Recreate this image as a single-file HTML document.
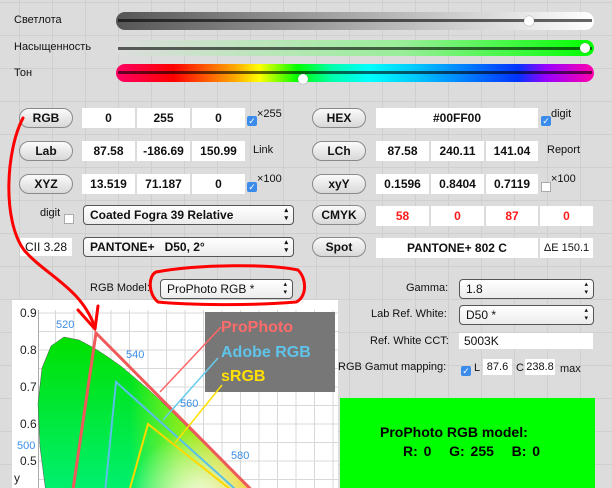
<!DOCTYPE html>
<html style="overflow:hidden;width:612px;height:488px"><head><meta charset="utf-8"><style>
*{box-sizing:border-box;margin:0;padding:0}
body{width:612px;height:488px;overflow:hidden;position:relative;font-family:"Liberation Sans",sans-serif;
background-color:#dcdcdc;
background-image:linear-gradient(to right,#cfcfcf 1px,transparent 1px),linear-gradient(to bottom,#cfcfcf 1px,transparent 1px);
background-size:33px 33px;background-position:19px 2px}
.a{position:absolute}
.lbl{position:absolute;font-size:11px;color:#111;white-space:nowrap}
.trk{position:absolute;left:116px;width:478px;height:18px;border-radius:9px}
.trk:after{content:"";position:absolute;left:2px;right:2px;top:7px;height:3px;background:rgba(0,0,0,.6)}
.knob{position:absolute;width:10px;height:10px;border-radius:50%;background:#fff;box-shadow:0 0 1px #555;z-index:2}
.btn{position:absolute;width:54px;height:20px;border-radius:10px;border:1px solid #8a8a8a;background:linear-gradient(#fbfbfb,#d8d8d8);font-weight:bold;font-size:12px;text-align:center;line-height:18px;color:#111}
.f{position:absolute;height:20px;background:#fff;font-weight:bold;font-size:12px;text-align:center;line-height:20px;color:#111}
.sel{position:absolute;height:20px;border:1px solid #555;border-radius:4px;background:linear-gradient(#fff,#ececec);font-size:12px;line-height:18px;padding-left:6px;color:#111}
.sel:after{content:"▴\A▾";white-space:pre;position:absolute;right:5px;top:1px;font-size:7px;line-height:8px}
.cb{position:absolute;width:10px;height:10px;border-radius:2px;background:#3b8bea;color:#fff;font-size:9px;line-height:10px;text-align:center}
.cbe{position:absolute;width:10px;height:10px;background:#fff;border:1px solid #aaa}
.r{color:#ff1a1a}
</style></head><body>
<div class="lbl" style="left:14px;top:14px">Светлота</div>
<div class="trk" style="top:12px;background:linear-gradient(to right,#555,#aaa 50%,#fff)"></div>
<div class="knob" style="left:524px;top:16px"></div>
<div class="lbl" style="left:14px;top:41px">Насыщенность</div>
<div class="trk" style="top:40px;height:16px;background:linear-gradient(to right,#ddd,#9e9 60%,#0f0)"></div>
<div class="knob" style="left:580px;top:43px"></div>
<div class="lbl" style="left:14px;top:67px">Тон</div>
<div class="trk" style="top:64px;background:linear-gradient(to right,#f06,#f00 12%,#fa0 25%,#ff0 30%,#0f0 38%,#0fa 45%,#0ff 53%,#0cf 62%,#03f 84%,#90f 90%,#f0a 100%)"></div>
<div class="knob" style="left:298px;top:74px"></div>

<div class="btn" style="left:19px;top:108px">RGB</div>
<div class="f" style="left:82px;top:108px;width:53px">0</div>
<div class="f" style="left:137px;top:108px;width:53px">255</div>
<div class="f" style="left:192px;top:108px;width:53px">0</div>
<div class="cb" style="left:247px;top:116px">✓</div><div class="lbl" style="left:257px;top:108px">×255</div>
<div class="btn" style="left:19px;top:141px">Lab</div>
<div class="f" style="left:82px;top:141px;width:53px">87.58</div>
<div class="f" style="left:137px;top:141px;width:53px">-186.69</div>
<div class="f" style="left:192px;top:141px;width:53px">150.99</div>
<div class="lbl" style="left:253px;top:144px">Link</div>
<div class="btn" style="left:19px;top:174px">XYZ</div>
<div class="f" style="left:82px;top:174px;width:53px">13.519</div>
<div class="f" style="left:137px;top:174px;width:53px">71.187</div>
<div class="f" style="left:192px;top:174px;width:53px">0</div>
<div class="cb" style="left:247px;top:182px">✓</div><div class="lbl" style="left:257px;top:173px">×100</div>
<div class="lbl" style="left:40px;top:207px">digit</div><div class="cbe" style="left:64px;top:214px"></div>
<div class="sel" style="left:83px;top:205px;width:211px;font-weight:bold">Coated Fogra 39 Relative</div>
<div class="f" style="left:20px;top:238px;width:52px;height:18px;line-height:18px;font-weight:normal">CII 3.28</div>
<div class="sel" style="left:83px;top:237px;width:211px;font-weight:bold">PANTONE+&nbsp;&nbsp; D50, 2°</div>
<div class="lbl" style="left:90px;top:282px">RGB Model:</div>
<div class="sel" style="left:160px;top:279px;width:133px">ProPhoto RGB *</div>

<div class="btn" style="left:312px;top:108px">HEX</div>
<div class="f" style="left:376px;top:108px;width:162px">#00FF00</div>
<div class="cb" style="left:541px;top:116px">✓</div><div class="lbl" style="left:551px;top:108px">digit</div>
<div class="btn" style="left:312px;top:141px">LCh</div>
<div class="f" style="left:376px;top:141px;width:53px">87.58</div>
<div class="f" style="left:431px;top:141px;width:53px">240.11</div>
<div class="f" style="left:486px;top:141px;width:52px">141.04</div>
<div class="lbl" style="left:547px;top:144px">Report</div>
<div class="btn" style="left:312px;top:174px">xyY</div>
<div class="f" style="left:376px;top:174px;width:53px">0.1596</div>
<div class="f" style="left:431px;top:174px;width:53px">0.8404</div>
<div class="f" style="left:486px;top:174px;width:52px">0.7119</div>
<div class="cbe" style="left:541px;top:182px"></div><div class="lbl" style="left:551px;top:173px">×100</div>
<div class="btn" style="left:312px;top:205px">CMYK</div>
<div class="f r" style="left:376px;top:206px;width:53px">58</div>
<div class="f r" style="left:431px;top:206px;width:53px">0</div>
<div class="f r" style="left:486px;top:206px;width:52px">87</div>
<div class="f r" style="left:540px;top:206px;width:53px">0</div>
<div class="btn" style="left:312px;top:237px">Spot</div>
<div class="f" style="left:376px;top:238px;width:162px">PANTONE+ 802 C</div>
<div class="f" style="left:540px;top:238px;width:53px;font-weight:normal;font-size:11px">ΔE 150.1</div>
<div class="lbl" style="left:406px;top:282px">Gamma:</div>
<div class="sel" style="left:459px;top:279px;width:135px">1.8</div>
<div class="lbl" style="left:371px;top:308px">Lab Ref. White:</div>
<div class="sel" style="left:459px;top:305px;width:135px">D50 *</div>
<div class="lbl" style="left:370px;top:335px">Ref. White CCT:</div>
<div class="f" style="left:459px;top:333px;width:134px;height:16px;line-height:16px;text-align:left;padding-left:5px;font-weight:normal">5003K</div>
<div class="lbl" style="left:338px;top:361px">RGB Gamut mapping:</div>
<div class="cb" style="left:461px;top:366px">✓</div><div class="lbl" style="left:474px;top:362px">L</div>
<div class="f" style="left:483px;top:359px;width:29px;height:16px;line-height:16px;font-weight:normal;font-size:11px">87.6</div>
<div class="lbl" style="left:516px;top:362px">C</div>
<div class="f" style="left:525px;top:359px;width:30px;height:16px;line-height:16px;font-weight:normal;font-size:11px;overflow:hidden;white-space:nowrap">238.8</div>
<div class="lbl" style="left:560px;top:363px">max</div>
<div class="a" style="left:340px;top:398px;width:255px;height:90px;background:#00ff00"></div>
<div class="a" style="left:380px;top:424px;font-weight:bold;font-size:14px;color:#000;white-space:nowrap">ProPhoto RGB model:</div>
<div class="a" style="left:403px;top:443px;font-weight:bold;font-size:14px;color:#000;word-spacing:2px;white-space:nowrap">R: 0&nbsp;&nbsp; G: 255&nbsp;&nbsp; B: 0</div>

<svg class="a" style="left:0;top:0;display:block" width="612" height="488" viewBox="0 0 612 488">
<defs>
<linearGradient id="g1" x1="0" y1="0" x2="0" y2="1"><stop offset="0" stop-color="#00e000"/><stop offset=".5" stop-color="#00f070"/><stop offset="1" stop-color="#00ffd0"/></linearGradient>
<linearGradient id="g2" x1="130" y1="0" x2="310" y2="0" gradientUnits="userSpaceOnUse"><stop offset="0" stop-color="#ff0" stop-opacity="0"/><stop offset=".3" stop-color="#ee0" stop-opacity=".6"/><stop offset=".6" stop-color="#fc0" stop-opacity=".9"/><stop offset="1" stop-color="#f70"/></linearGradient>
<radialGradient id="g3" cx="200" cy="500" r="70" gradientUnits="userSpaceOnUse"><stop offset="0" stop-color="#fff" stop-opacity=".9"/><stop offset="1" stop-color="#fff" stop-opacity="0"/></radialGradient>
<clipPath id="cp"><rect x="12" y="300" width="326" height="188"/></clipPath>
</defs>
<rect x="12" y="300" width="326" height="188" fill="#fff"/>
<g clip-path="url(#cp)">
<g stroke="#d8d8d8" stroke-width="1">
<path d="M38 313H338M38 331.5H338M38 350H338M38 368.5H338M38 387H338M38 405.5H338M38 424H338M38 442.5H338M38 461H338M38 479.5H338"/>
<path d="M55.5 310V488M74 310V488M92.5 310V488M111 310V488M129.5 310V488M148 310V488M166.5 310V488M185 310V488M203.5 310V488M222 310V488M240.5 310V488M259 310V488M277.5 310V488M296 310V488M314.5 310V488M333 310V488"/>
</g>
<path d="M38.5 310V488" stroke="#aaa"/>
<path d="M101 644L90 635 83 625 78 614 71 597 62 572 54 537 46 493 40 447 38 404 42 368 51 346 64 337 79 340 94 348 108 357 122 367 135 378 149 390 162 402 175 415 188 428 201 441 214 453 227 466 250 489 269 508 293 532 309 548Z" fill="url(#g1)" stroke="#555" stroke-width=".5"/>
<path d="M101 644L90 635 83 625 78 614 71 597 62 572 54 537 46 493 40 447 38 404 42 368 51 346 64 337 79 340 94 348 108 357 122 367 135 378 149 390 162 402 175 415 188 428 201 441 214 453 227 466 250 489 269 508 293 532 309 548Z" fill="url(#g2)"/>
<path d="M101 644L90 635 83 625 78 614 71 597 62 572 54 537 46 493 40 447 38 404 42 368 51 346 64 337 79 340 94 348 108 357 122 367 135 378 149 390 162 402 175 415 188 428 201 441 214 453 227 466 250 489 269 508 293 532 309 548Z" fill="url(#g3)"/>
<path d="M148 424L274 524 92 624Z" fill="none" stroke="#ffd800" stroke-width="2"/>
<path d="M116 382L274 524 92 624Z" fill="none" stroke="#5bc0e8" stroke-width="2"/>
<path d="M96 333L309 548 50 646Z" fill="none" stroke="#ee5a5a" stroke-width="3"/>
<rect x="205" y="312" width="130" height="80" fill="#777"/>
<path d="M160 392L221 327" stroke="#ff6666" stroke-width="1.5"/>
<path d="M163 420L218 358" stroke="#66ccee" stroke-width="1.5"/>
<path d="M175 443L222 385" stroke="#ffe000" stroke-width="1.5"/>
<g font-family="Liberation Sans,sans-serif" font-weight="bold" font-size="16">
<text x="221" y="332" fill="#ff6b6b">ProPhoto</text>
<text x="221" y="357" fill="#5fc4ea">Adobe RGB</text>
<text x="221" y="381" fill="#ffe000">sRGB</text></g>
<g font-family="Liberation Sans,sans-serif" font-size="11" fill="#3a8ee8">
<text x="56" y="328">520</text><text x="126" y="358">540</text><text x="180" y="407">560</text><text x="231" y="459">580</text><text x="17" y="449">500</text></g>
<g font-family="Liberation Sans,sans-serif" font-size="12" fill="#222">
<text x="20" y="317">0.9</text><text x="20" y="354">0.8</text><text x="20" y="391">0.7</text><text x="20" y="428">0.6</text><text x="20" y="465">0.5</text><text x="14" y="482">y</text></g>
</g>
<g fill="none" stroke="#f00" stroke-width="3" stroke-linecap="round" stroke-linejoin="round">
<path d="M23 118C6 150 2 220 24 250C45 275 82 288 95 328"/>
<path d="M78 310L95 329L98 306"/>
<path d="M156 272C200 264 270 264 298 270C308 280 306 298 296 302C250 306 190 305 158 302C148 294 148 276 156 272Z"/>
</g>
</svg>
</body></html>
